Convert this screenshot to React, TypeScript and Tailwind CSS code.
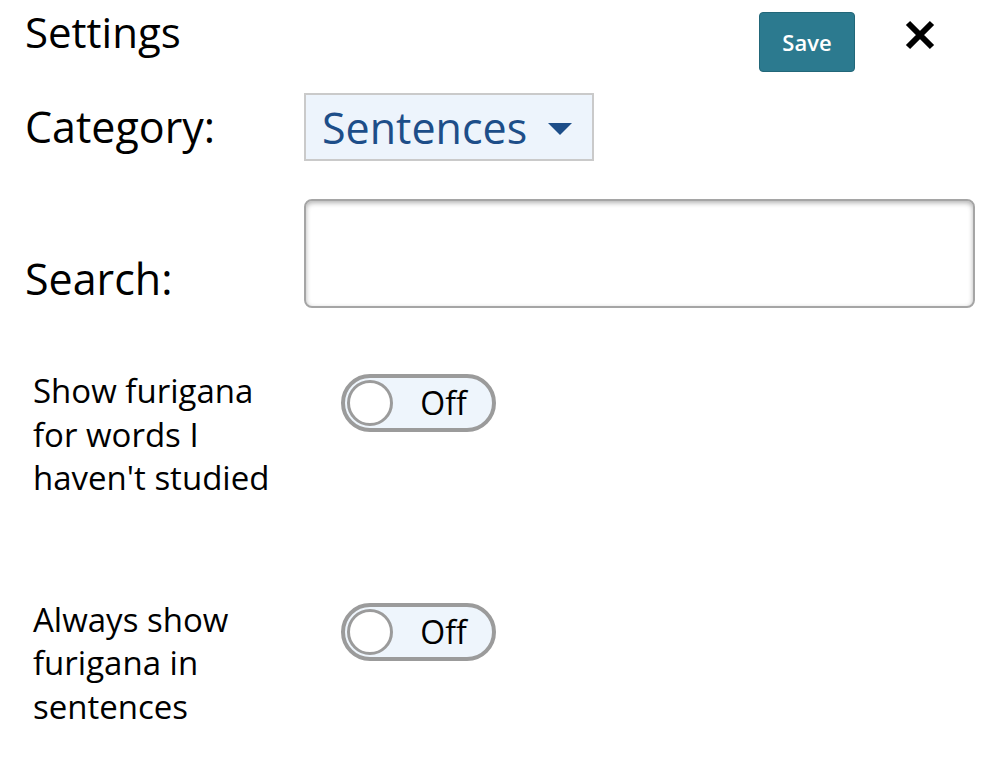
import { useState } from "react";

function Toggle({ on, onChange }: { on: boolean; onChange: (v: boolean) => void }) {
  return (
    <button
      type="button"
      onClick={() => onChange(!on)}
      className="flex items-center w-[155px] h-[58px] rounded-full border-[4px] border-[#9b9b9b] bg-[#eef5fc] pl-[2px] pr-[2px] shrink-0"
    >
      <span className="w-[46px] h-[46px] rounded-full bg-white border-[3px] border-[#9b9b9b] shrink-0" />
      <span className="flex-1 text-center text-[32px] leading-none text-black pl-[4px]">{on ? "On" : "Off"}</span>
    </button>
  );
}

export default function App() {
  const [furiganaNew, setFuriganaNew] = useState(false);
  const [furiganaAlways, setFuriganaAlways] = useState(false);
  const labelClass = "w-[250px] text-[33px] leading-[43.5px] text-black shrink-0";
  return (
    <div className="w-[1000px] h-[760px] bg-white text-black font-['Open_Sans',sans-serif] overflow-hidden">
      <div className="flex items-start">
        <h1 className="ml-[25px] mt-[8px] text-[42px] leading-[48px] font-normal">Settings</h1>
        <button className="ml-auto mt-[12px] w-[96px] h-[60px] rounded-[4px] bg-[#2c7a8f] border border-[#226779] text-white text-[22px] font-semibold">
          Save
        </button>
        <button className="ml-[43px] mr-[58px] mt-[13px] w-[44px] h-[44px] flex items-center justify-center">
          <svg width="32" height="30" viewBox="0 0 32 30">
            <path d="M4 3 L28 27 M28 3 L4 27" stroke="#000" strokeWidth="6" strokeLinecap="butt" />
          </svg>
        </button>
      </div>

      <div className="flex items-center mt-[21px]">
        <span className="ml-[25px] w-[279px] text-[43px] leading-[48px]">Category:</span>
        <button className="flex items-center h-[68px] w-[290px] bg-[#edf4fc] border-2 border-[#cacaca] pl-[16px] pr-[20px]">
          <span className="text-[43px] leading-none text-[#1d4e89]">Sentences</span>
          <svg className="ml-auto mt-[4px]" width="24" height="13" viewBox="0 0 24 13">
            <path d="M0 0 H24 L12 12 Z" fill="#1d4e89" />
          </svg>
        </button>
      </div>

      <div className="flex items-end mt-[38px]">
        <span className="ml-[25px] w-[279px] text-[43px] leading-[48px] pb-[5px]">Search:</span>
        <input
          className="w-[671px] h-[109px] rounded-[8px] border-2 border-[#a5a5a5] bg-white shadow-[inset_0_2px_5px_rgba(0,0,0,0.3)] outline-none px-4 text-[30px]"
        />
      </div>

      <div className="flex items-start mt-[61px] ml-[33px]">
        <p className={labelClass}>Show furigana for words I haven't studied</p>
        <div className="ml-[58px] mt-[5px]">
          <Toggle on={furiganaNew} onChange={setFuriganaNew} />
        </div>
      </div>

      <div className="flex items-start mt-[98px] ml-[33px]">
        <p className={labelClass}>Always show furigana in sentences</p>
        <div className="ml-[58px] mt-[5px]">
          <Toggle on={furiganaAlways} onChange={setFuriganaAlways} />
        </div>
      </div>
    </div>
  );
}
